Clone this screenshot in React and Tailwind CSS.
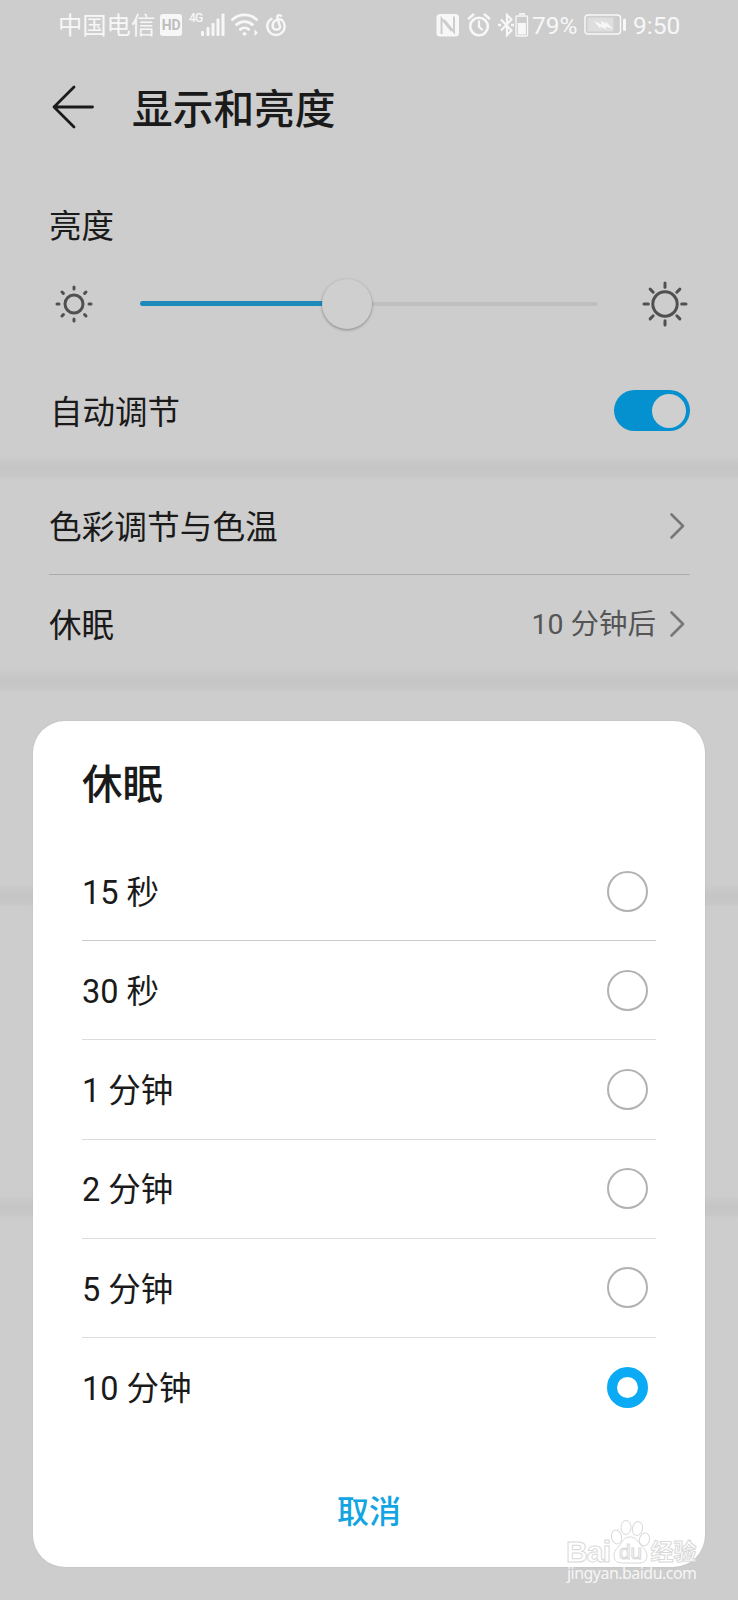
import { useState } from 'react';
import clsx from 'clsx';

const OPTIONS = ['15 秒', '30 秒', '1 分钟', '2 分钟', '5 分钟', '10 分钟'];

function SignalIcon() {
  return (
    <svg width="25" height="24" viewBox="0 0 25 24" fill="currentColor">
      <rect x="0" y="18" width="3" height="5" rx="1" />
      <rect x="5.5" y="14" width="3" height="9" rx="1" />
      <rect x="10.5" y="10" width="3" height="13" rx="1" />
      <rect x="15.5" y="5.5" width="3" height="17.5" rx="1" />
      <rect x="20.5" y="0.5" width="3" height="22.5" rx="1" />
    </svg>
  );
}

function WifiIcon() {
  return (
    <svg width="28" height="24" viewBox="0 0 28 24" fill="none" stroke="currentColor" strokeWidth="2.8" strokeLinecap="round">
      <path d="M1.5 6.5a18 18 0 0 1 24 0" />
      <path d="M5.5 11.6a12 12 0 0 1 16 0" />
      <path d="M9.3 16.4a6.5 6.5 0 0 1 8.4 0" />
      <circle cx="13.5" cy="20.8" r="1.5" fill="currentColor" strokeWidth="1" />
      <path d="M23.5 16.5v6.5l3.5-3.200z" fill="currentColor" stroke="none" />
    </svg>
  );
}

function MusicIcon() {
  return (
    <svg width="21" height="24" viewBox="0 0 21 24" fill="none" stroke="currentColor" strokeWidth="2.4" strokeLinecap="round">
      <path d="M5.5 5.800A8.700 8.700 0 1 0 16 7C12.500 4.900 6.300 7.600 6.600 13a3.900 3.900 0 0 0 7.600 1L11.300 4.600c-.4-2.200 1.800-3.200 3.600-1.800" />
    </svg>
  );
}

function NfcIcon() {
  return (
    <svg width="24" height="24" viewBox="0 0 24 24">
      <rect x="0.5" y="1" width="22.5" height="22.5" rx="3.5" fill="currentColor" />
      <path d="M5.500 21V5.500l10 12.500M18 3.500V19L8 7" fill="none" stroke="#cdcdcd" strokeWidth="2" />
    </svg>
  );
}

function AlarmIcon() {
  return (
    <svg width="24" height="24" viewBox="0 0 24 24" fill="none" stroke="currentColor" strokeLinecap="round">
      <circle cx="12" cy="13.5" r="8.800" strokeWidth="2.600" />
      <path d="M12 8.500v5.300l3 2.700" strokeWidth="2.300" />
      <path d="M1.800 5.500l4.500-4M22.200 5.500l-4.500-4" strokeWidth="2.500" />
    </svg>
  );
}

function BluetoothIcon() {
  return (
    <svg width="16" height="24" viewBox="0 0 16 24" fill="none" stroke="currentColor" strokeWidth="2.200">
      <path d="M3 6.500l10.500 11L9 22V2l4.500 4.500L3 17.500" />
      <path d="M0 12h3M13 12h3" strokeWidth="2.500" />
    </svg>
  );
}

function DeviceBatteryIcon() {
  return (
    <svg width="14" height="24" viewBox="0 0 14 24">
      <path d="M4 .8h6" stroke="currentColor" strokeWidth="1.8" />
      <rect x="1" y="3" width="11.5" height="20" rx="1" fill="none" stroke="currentColor" strokeWidth="1.3" />
      <rect x="2.8" y="10" width="8" height="11.5" fill="currentColor" />
    </svg>
  );
}

function BatteryIcon() {
  return (
    <svg width="43" height="22" viewBox="0 0 43 22">
      <rect x="1" y="1" width="35.5" height="19" rx="3" fill="none" stroke="currentColor" strokeWidth="1.5" />
      <rect x="3.5" y="3.500" width="26" height="14" fill="currentColor" opacity="0.4" />
      <path d="M10 7l8 3.500-1.500-4 6 3.500-1-3 7.500 8-7.500-2.500 1 3-6.500-3 .5 2.500z" fill="currentColor" />
      <path d="M40.500 6v9.500" stroke="currentColor" strokeWidth="3" strokeLinecap="round" />
    </svg>
  );
}

function StatusBar() {
  return (
    <div className="flex h-[50px] items-center pl-[58px] pr-[58px] text-[#f7f7f7]">
      <span className="w-[102px] pt-[2px] text-[24.3px] leading-none">中国电信</span>
      <span className="flex h-[22px] w-[22px] items-center justify-center rounded-[3px] bg-[#f7f7f7] font-['Roboto'] text-[14px] font-bold tracking-tight text-[#bdbdbd]">HD</span>
      <span className="mb-[14px] ml-[7px] w-[12px] font-['Roboto'] text-[12px] leading-none font-medium tracking-[-0.8px]">4G</span>
      <SignalIcon />
      <span className="ml-[5px]"><WifiIcon /></span>
      <span className="ml-[7px]"><MusicIcon /></span>
      <div className="ml-auto flex items-center">
        <NfcIcon />
        <span className="ml-[7px]"><AlarmIcon /></span>
        <span className="ml-[7px]"><BluetoothIcon /></span>
        <span className="ml-px"><DeviceBatteryIcon /></span>
        <span className="ml-[3px] w-[52px] pt-[2px] text-[24.500px] leading-none">79%</span>
        <BatteryIcon />
        <span className="ml-[6px] w-[47px] pt-[2px] text-[24.500px] leading-none">9:50</span>
      </div>
    </div>
  );
}

// r: disc radius, inner/outer: where each ray starts and ends
function SunIcon({ r, inner, outer }) {
  return (
    <svg width="48" height="48" viewBox="-24 -24 48 48" fill="none" stroke="#505050" strokeWidth="3" strokeLinecap="round">
      <circle r={r} />
      {[0, 45, 90, 135, 180, 225, 270, 315].map((a) => (
        <path key={a} d={`M0 ${-inner}V${-outer}`} transform={`rotate(${a})`} />
      ))}
    </svg>
  );
}

function Chevron() {
  return (
    <svg width="16" height="28" viewBox="0 0 16 28" fill="none" stroke="#777" strokeWidth="2.6" strokeLinecap="round" strokeLinejoin="round">
      <path d="M2.5 2.500L14 14L2.500 25.500" />
    </svg>
  );
}

function Band() {
  return <div className="h-[18px] bg-linear-to-b from-[#cacaca] via-[#c5c5c5] to-[#c8c8c8] shadow-[0_0_3px_#c8c8c8]" />;
}

function Radio({ checked }) {
  return (
    <span className={clsx('size-[41px] rounded-full', checked ? 'border-[10px] border-[#0aaaf5]' : 'border-2 border-[#b2b2b2]')} />
  );
}

function Watermark() {
  return (
    <svg className="absolute top-[1515px] left-[560px]" width="150" height="75" viewBox="560 1515 150 75">
      <g fill="#fff" fillOpacity="0.75" stroke="#d9d9d9" strokeWidth="1">
        <text x="566" y="1561.5" fontSize="30" fontWeight="700" textLength="45" fontFamily="Liberation Sans, sans-serif">Bai</text>
        <ellipse cx="616.5" cy="1537" rx="5" ry="7" transform="rotate(-12 616.5 1537)" />
        <ellipse cx="626" cy="1527.5" rx="5" ry="7" />
        <ellipse cx="637.5" cy="1528.5" rx="5" ry="7" transform="rotate(12 637.5 1528.5)" />
        <ellipse cx="644.5" cy="1539.5" rx="5" ry="6.5" transform="rotate(15 644.5 1539.5)" />
        <path d="M630 1537c-5 0-7 3-9 6.500s-7 6-7 12 4 7.500 8 7.500h17c5 0 8-2.500 8-7.500s-5-8.500-7.500-12-4.500-6.500-9.500-6.500z" />
        <text x="619" y="1558.5" fontSize="20" textLength="23" lengthAdjust="spacingAndGlyphs" fontFamily="Liberation Sans, sans-serif">du</text>
        <text x="650.500" y="1560" fontSize="23" fontWeight="700" fontFamily="Noto Sans CJK SC, sans-serif">经验</text>
      </g>
      <text x="567" y="1579" fontSize="16" textLength="130" fill="#f6f6f6" fontFamily="Noto Sans, sans-serif">jingyan.baidu.com</text>
    </svg>
  );
}

function SleepDialog({ value, onChange }) {
  return (
    <div className="absolute top-[721px] left-[33px] h-[846px] w-[672px] rounded-[32px] bg-white pr-[49px] pl-[49px] shadow-[0_0_2px_#bbb]">
      <h2 className="flex h-[121px] items-center pt-[8px] text-[40.5px] font-medium">休眠</h2>
      <ul>
        {OPTIONS.map((label) => (
          <li key={label}
            onClick={() => onChange(label)}
            className="flex h-[99.2px] items-center justify-between border-b border-[#dcdcdc] pr-2 first:border-[#cbcbcb] last:border-transparent">
            <span className="pt-[4px]">{label}</span>
            <Radio checked={label === value} />
          </li>
        ))}
      </ul>
      <button className="mt-[24px] flex h-[88px] w-full items-center justify-center pt-[13px] text-[32px] font-medium text-[#12a5e2]">取消</button>
    </div>
  );
}

export default function App() {
  const [sleep, setSleep] = useState('10 分钟');

  return (
    <div className="relative h-[1600px] w-[738px] overflow-hidden bg-[#cdcdcd] font-['Roboto','Noto_Sans_CJK_SC',sans-serif] text-[32.5px] leading-none text-[#1a1a1a]">
      <StatusBar />

      <header className="flex h-[113px] items-center pl-[52px]">
        <svg width="44" height="44" viewBox="0 0 44 44" fill="none" stroke="#1a1a1a" strokeWidth="2.8" strokeLinecap="round" strokeLinejoin="round">
          <path d="M22 2L2 22L22 42M2 22H40.500" />
        </svg>
        <h1 className="ml-[36px] pt-[8px] text-[40.700px] font-medium">显示和亮度</h1>
      </header>

      {/* Brightness */}
      <section>
        <div className="mt-[30px] flex h-[64px] items-center pt-[4px] pl-[49px]">亮度</div>
        <div className="flex h-[93px] items-center pl-[49.5px]">
          <SunIcon r={9} inner={15} outer={17} />
          <div className="relative ml-[42px] flex h-[50px] w-[458px] items-center">
            <div className="h-[5px] w-[207px] rounded-full bg-[#1e8aba]" />
            <div className="h-[4px] flex-1 rounded-full bg-[#bfbfbf]" />
            <div className="absolute left-[182px] size-[50px] rounded-full bg-[#cfcfcf] shadow-[0_1px_3px_rgba(0,0,0,0.35)]" />
          </div>
          <div className="ml-[43px]"><SunIcon r={12.2} inner={16.7} outer={21} /></div>
        </div>
        <div className="mt-3 flex h-[97px] items-center justify-between pr-[48px] pl-[50px]">
          <span className="pt-[5px]">自动调节</span>
          <span className="flex h-[41px] w-[76px] items-center justify-end rounded-full bg-[#0590d0] pr-[4px]">
            <span className="size-[34px] rounded-full bg-[#cfcfcf]" />
          </span>
        </div>
      </section>
      <Band />

      <section className="pr-[48px] pl-[49px]">
        <div className="flex h-[98px] items-center justify-between border-b border-[#adadad] pr-[5px]">
          <span className="pt-[5px] text-[32.700px]">色彩调节与色温</span>
          <Chevron />
        </div>
        <div className="flex h-[97px] items-center pr-[5px]">
          <span className="pt-[5px]">休眠</span>
          <span className="mr-[13px] ml-auto pt-[3px] text-[28.500px] text-[#555]">10 分钟后</span>
          <Chevron />
        </div>
      </section>
      <Band />
      <div className="h-[197px]" />
      <Band />
      <div className="h-[293px]" />
      <Band />

      <SleepDialog value={sleep} onChange={setSleep} />
      <Watermark />
    </div>
  );
}
